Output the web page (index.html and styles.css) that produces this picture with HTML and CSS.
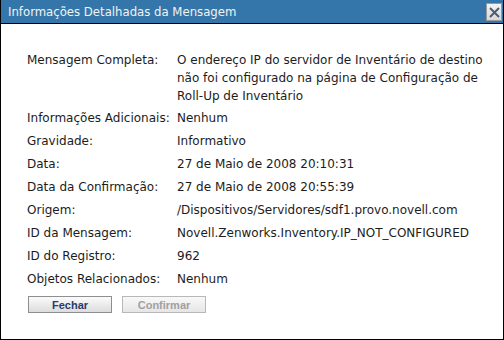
FILE: index.html
```html
<!DOCTYPE html>
<html lang="pt">

<head>
  <meta charset="UTF-8">
  <title>Informações Detalhadas da Mensagem</title>
  <link rel="stylesheet" href="styles.css">
</head>

<body>
  <div class="dialog">
    <div class="titlebar">
      <span class="title">Informações Detalhadas da Mensagem</span>
      <button class="close" title="Fechar">
        <svg width="11" height="11" viewBox="0 0 11 11">
          <path d="M1 1 L10 10 M10 1 L1 10" stroke="#4a5d77" stroke-width="2" />
        </svg>
      </button>
    </div>
    <div class="body">
      <div class="details">
        <div class="label first">Mensagem Completa:</div>
        <div class="value first">O endereço IP do servidor de Inventário de destino não foi configurado na página de Configuração de Roll-Up de Inventário</div>
        <div class="label">Informações Adicionais:</div>
        <div class="value">Nenhum</div>
        <div class="label">Gravidade:</div>
        <div class="value">Informativo</div>
        <div class="label">Data:</div>
        <div class="value">27 de Maio de 2008 20:10:31</div>
        <div class="label">Data da Confirmação:</div>
        <div class="value">27 de Maio de 2008 20:55:39</div>
        <div class="label">Origem:</div>
        <div class="value">/Dispositivos/Servidores/sdf1.provo.novell.com</div>
        <div class="label">ID da Mensagem:</div>
        <div class="value">Novell.Zenworks.Inventory.IP_NOT_CONFIGURED</div>
        <div class="label">ID do Registro:</div>
        <div class="value">962</div>
        <div class="label">Objetos Relacionados:</div>
        <div class="value">Nenhum</div>
      </div>
      <div class="buttons">
        <button class="btn">Fechar</button>
        <button class="btn" disabled>Confirmar</button>
      </div>
    </div>
  </div>
</body>

</html>
```

FILE: styles.css
```css
* {
  margin: 0;
  padding: 0;
  box-sizing: border-box;
}

body {
  background: #fff;
  font-family: "DejaVu Sans", sans-serif;
}

.dialog {
  width: 504px;
  height: 340px;
  border: 1px solid #000;
  border-top: 0;
  background: #fff;
}

.titlebar {
  height: 24px;
  background: #3476aa;
  border-bottom: 1px solid #000;
  display: flex;
  align-items: center;
  justify-content: space-between;
  padding: 0 1px 0 7px;

  & .title {
    color: #f2f2f2;
    font-family: "DejaVu Sans Condensed", "DejaVu Sans", sans-serif;
    font-size: 13px;
  }

  & .close {
    width: 16px;
    height: 18px;
    margin-top: 1px;
    background: linear-gradient(#f4f4f4, #d8d8d8);
    border: 1px solid #9a9a9a;
    display: flex;
    align-items: center;
    justify-content: center;
  }
}

.body {
  padding: 27px 0 0 26px;
}

.details {
  display: grid;
  grid-template-columns: 150px 306px;
  row-gap: 5px;
  font-size: 12px;
  line-height: 18px;
  color: #1c1c1c;

  & .first {
    margin-bottom: -1px;
  }
}

.buttons {
  display: flex;
  gap: 10px;
  margin-top: 8px;
  padding-left: 1px;

  & .btn {
    width: 84px;
    height: 17px;
    font-family: "Liberation Sans", Arial, sans-serif;
    font-size: 11px;
    font-weight: bold;
    color: #2b3a67;
    background: linear-gradient(#fbfbfb, #dcdcdc);
    border: 1px solid #8e8e8e;
  }

  & .btn:disabled {
    color: #a0a0a0;
    border-color: #b8b8b8;
    background: linear-gradient(#f8f8f8, #e6e6e6);
  }
}
```
